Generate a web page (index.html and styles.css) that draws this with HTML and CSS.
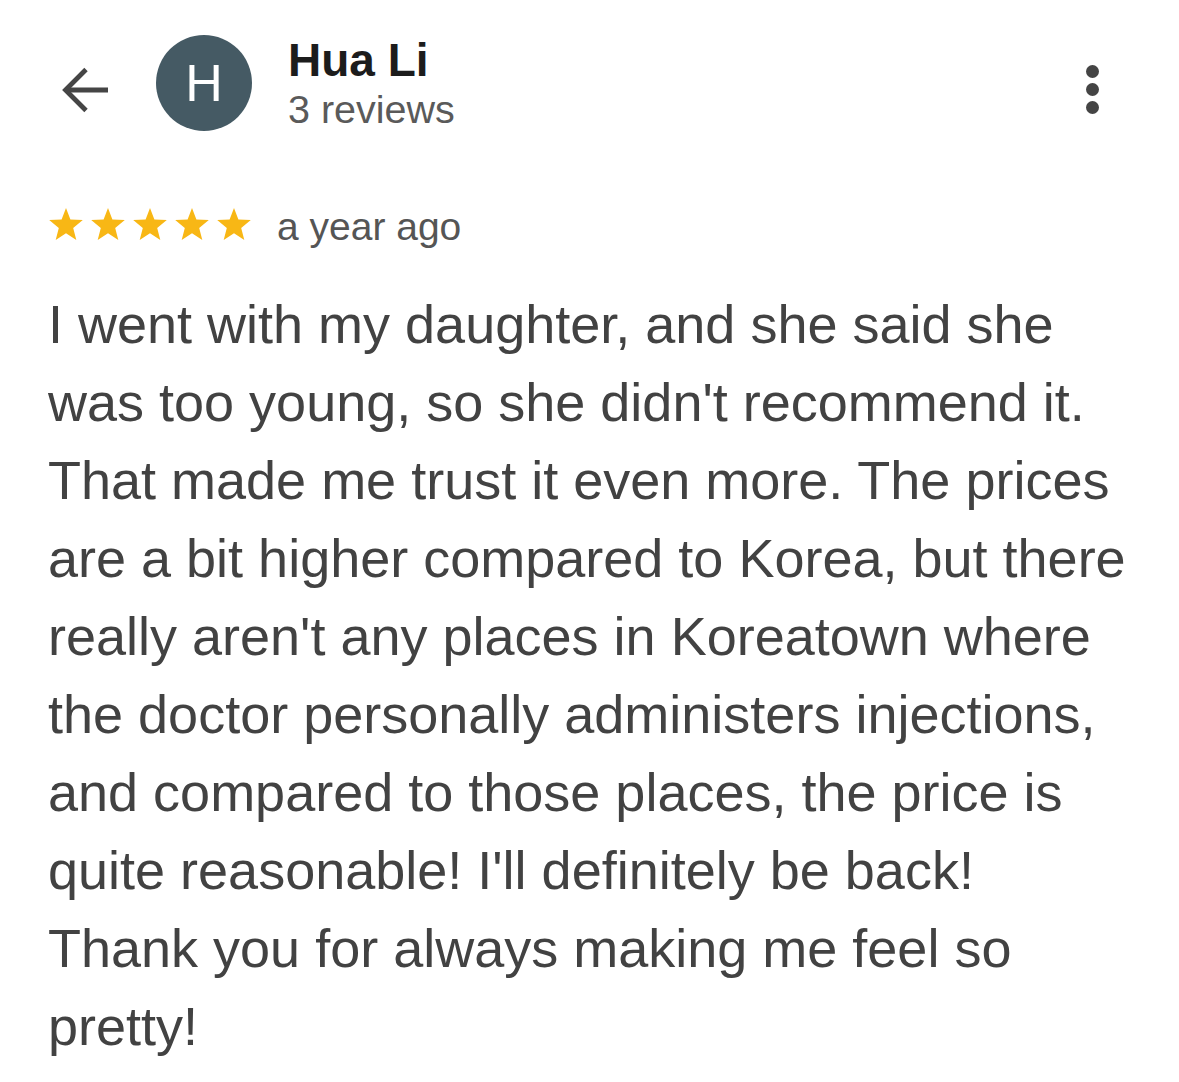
FILE: index.html
```html
<!DOCTYPE html>
<html lang="en">
<head>
<meta charset="utf-8">
<title>Hua Li review</title>
<link rel="stylesheet" href="styles.css">
</head>
<body>
<div class="page">
  <header class="header">
    <button class="back" aria-label="Back">
      <svg width="48" height="48" viewBox="0 0 48 48" fill="none" stroke="#454545" stroke-width="4.8" stroke-linecap="butt" stroke-linejoin="miter">
        <path d="M47 24H7"/>
        <path d="M25 3.5L4.5 24L25 44.5"/>
      </svg>
    </button>
    <div class="avatar">H</div>
    <div class="who">
      <div class="name">Hua Li</div>
      <div class="count">3 reviews</div>
    </div>
    <div class="menu" aria-label="More">
      <span class="dot"></span><span class="dot"></span><span class="dot"></span>
    </div>
  </header>

  <div class="meta">
    <svg class="stars" width="206" height="36" viewBox="0 0 206 36">
      <defs>
        <path id="st" d="M18 1 L22.4 12.4 L34.8 13.1 L25.2 20.9 L28.3 33 L18 26.3 L7.7 33 L10.8 20.9 L1.2 13.1 L13.6 12.4 Z"/>
      </defs>
      <g fill="#f8b715">
        <use href="#st" x="0"/>
        <use href="#st" x="42"/>
        <use href="#st" x="84"/>
        <use href="#st" x="126"/>
        <use href="#st" x="168"/>
      </g>
    </svg>
    <span class="when">a year ago</span>
  </div>

  <p class="review">I went with my daughter, and she said she was too young, so she didn't recommend it. That made me trust it even more. The prices are a bit higher compared to Korea, but there really aren't any places in Koreatown where the doctor personally administers injections, and compared to those places, the price is quite reasonable! I'll definitely be back! Thank you for always making me feel so pretty!</p>
</div>
</body>
</html>
```

FILE: styles.css
```css
html, body {
  margin: 0;
  padding: 0;
  background: #ffffff;
}

body {
  font-family: "Liberation Sans", Arial, sans-serif;
  color: #444444;
}

.page {
  width: 1179px;
  box-sizing: border-box;
  padding: 35px 44px 0 48px;
}

.header {
  display: flex;
  align-items: flex-start;
}

.back {
  margin: 31px 0 0 13px;
  padding: 0;
  border: 0;
  background: none;
  width: 48px;
  height: 48px;
  display: block;
}

.back svg {
  display: block;
}

.avatar {
  margin-left: 47px;
  width: 96px;
  height: 96px;
  border-radius: 50%;
  background: #455a64;
  color: #ffffff;
  font-size: 52px;
  line-height: 96px;
  text-align: center;
  flex: none;
}

.who {
  margin-left: 36px;
  display: flex;
  flex-direction: column;
}

.name {
  font-weight: 700;
  font-size: 46px;
  line-height: 50px;
  color: #1c1c1c;
}

.count {
  margin-top: 1px;
  font-size: 39.5px;
  line-height: 46px;
  color: #5a5a5a;
}

.menu {
  margin-left: auto;
  margin-right: 36px;
  margin-top: 30px;
  display: flex;
  flex-direction: column;
  gap: 5px;
}

.dot {
  display: block;
  width: 13px;
  height: 13px;
  border-radius: 50%;
  background: #444444;
}

.meta {
  margin-top: 73px;
  display: flex;
  align-items: flex-start;
  gap: 23px;
}

.stars {
  display: block;
  margin-top: 2px;
}

.when {
  font-size: 39px;
  line-height: 44px;
  color: #555555;
}

.review {
  margin: 36px 0 0 0;
  font-size: 54px;
  line-height: 78px;
  color: #424242;
}
```
